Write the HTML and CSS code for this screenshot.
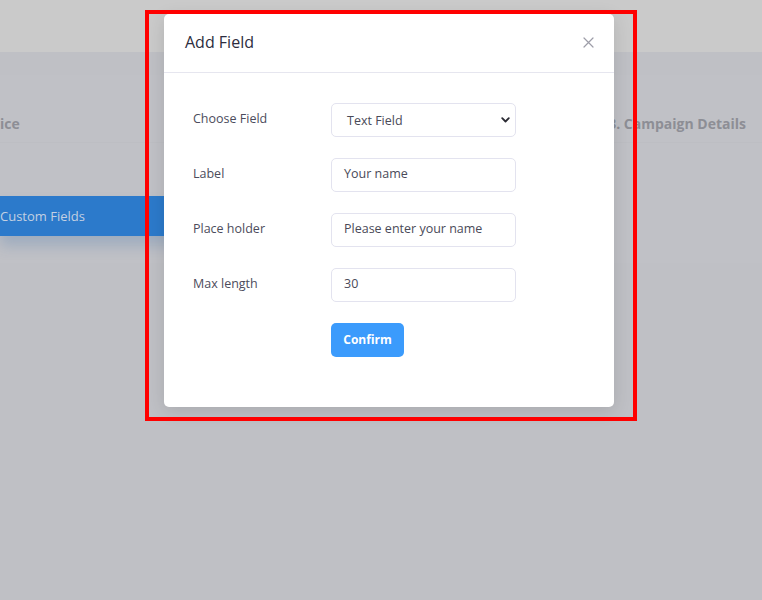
FILE: index.html
```html
<!DOCTYPE html>
<html>
<head>
<meta charset="utf-8">
<link rel="stylesheet" href="styles.css">
</head>
<body>
<div class="page">
  <div class="topbar"></div>
  <div class="main">
    <div class="card">
      <div class="steps">
        <span class="step">ice</span>
        <span class="step">3. Campaign Details</span>
      </div>
      <div class="card-body">
        <div class="tab">Custom Fields</div>
      </div>
    </div>
  </div>
</div>

<div class="modal">
  <div class="modal-header">
    <h2 class="modal-title">Add Field</h2>
    <svg class="close" width="11" height="11" viewBox="0 0 11 11"><path d="M1 1 L10 10 M10 1 L1 10" stroke="#9d9da8" stroke-width="1.2" stroke-linecap="round"/></svg>
  </div>
  <div class="modal-body">
    <div class="row">
      <label class="lbl">Choose Field</label>
      <div class="select">
        <span>Text Field</span>
        <svg class="chev" width="9" height="6" viewBox="0 0 9 6"><path d="M1.2 1.2 L4.5 4.5 L7.8 1.2" fill="none" stroke="#2b2b33" stroke-width="1.8" stroke-linecap="round" stroke-linejoin="round"/></svg>
      </div>
    </div>
    <div class="row">
      <label class="lbl">Label</label>
      <div class="input">Your name</div>
    </div>
    <div class="row">
      <label class="lbl">Place holder</label>
      <div class="input">Please enter your name</div>
    </div>
    <div class="row">
      <label class="lbl">Max length</label>
      <div class="input">30</div>
    </div>
    <div class="row">
      <span class="lbl"></span>
      <button class="btn">Confirm</button>
    </div>
  </div>
</div>

<div class="annot"></div>
</body>
</html>
```

FILE: styles.css
```css
* { box-sizing: border-box; }
html, body { margin: 0; padding: 0; }
body {
  width: 762px;
  height: 600px;
  overflow: hidden;
  background: #bfc0c5;
  font-family: "Open Sans", "Noto Sans", sans-serif;
}
.page { display: flex; flex-direction: column; height: 600px; }
.topbar { height: 52px; background: #cacaca; }
.main { flex: 1; background: #bfc0c5; padding-top: 23px; }
.card { background: #c0c1c6; height: 188px; display: flex; flex-direction: column; }
.steps {
  height: 68px;
  border-bottom: 1px solid #bdbec3;
  display: flex;
  justify-content: space-between;
  align-items: center;
  padding: 30px 16px 0 0;
}
.step { font-weight: 700; font-size: 14px; color: #8d8e95; }
.card-body { flex: 1; padding-top: 53px; }
.tab {
  width: 200px;
  height: 40px;
  background: #2c7acb;
  color: #c3d0e2;
  font-size: 13px;
  display: flex;
  align-items: center;
  padding-left: 0;
  box-shadow: 0 10px 14px rgba(60, 110, 170, 0.25);
}

.modal {
  position: absolute;
  left: 164px;
  top: 14px;
  width: 450px;
  height: 393px;
  background: #fff;
  border-radius: 5px;
  box-shadow: 0 4px 18px rgba(0, 0, 0, 0.12);
}
.modal-header {
  height: 59px;
  border-bottom: 1px solid #e6e6ef;
  display: flex;
  align-items: center;
  justify-content: space-between;
  padding: 0 20px 2px 21px;
}
.modal-title { margin: 0; font-size: 16px; font-weight: 500; color: #2d2d40; }
.modal-body { padding: 30px 0 0 29px; display: flex; flex-direction: column; gap: 21px; }
.row { display: flex; align-items: center; height: 34px; }
.lbl { width: 138px; font-size: 12.5px; color: #4c4c5c; padding-bottom: 3px; }
.input, .select {
  width: 185px;
  height: 34px;
  border: 1px solid #e3e3ef;
  border-radius: 5px;
  font-size: 12.5px;
  color: #4a4a58;
  display: flex;
  align-items: center;
  padding: 0 0 3px 12px;
}
.select { padding-left: 15px; padding-right: 5px; padding-bottom: 0; justify-content: space-between; }
.btn {
  width: 73px;
  height: 34px;
  border: none;
  border-radius: 5px;
  background: #3b9bfc;
  color: #fff;
  font-family: inherit;
  font-weight: 700;
  font-size: 12px;
  padding: 0 0 2px;
}
.annot {
  position: absolute;
  left: 145px;
  top: 10px;
  width: 492px;
  height: 411px;
  border: 4px solid #ff0000;
}
```
